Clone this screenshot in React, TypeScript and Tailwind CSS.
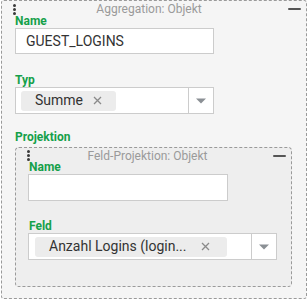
import React from 'react';

// ─── Small drawings ──────────────────────────────────────────────────────────

const DragDots: React.FC<{ className?: string }> = ({ className = '' }) => (
  <div className={`absolute flex flex-col gap-[1px] ${className}`}>
    <span className="w-[3px] h-[3px] rounded-full bg-[#3a3a3a]" />
    <span className="w-[3px] h-[3px] rounded-full bg-[#3a3a3a]" />
    <span className="w-[3px] h-[3px] rounded-full bg-[#3a3a3a]" />
  </div>
);

const Minus: React.FC<{ className?: string }> = ({ className = '' }) => (
  <span className={`absolute w-[13px] h-[2px] rounded-[1px] bg-[#555] ${className}`} />
);

const XMark = () => (
  <svg width="9" height="9" viewBox="0 0 9 9" className="shrink-0">
    <path d="M1 1L8 8M8 1L1 8" stroke="#8a8a8a" strokeWidth="1.3" />
  </svg>
);

const Caret = () => (
  <svg width="10" height="6" viewBox="0 0 10 6">
    <path d="M0 0.5H10L5 5.5Z" fill="#8b9095" />
  </svg>
);

// ─── Pieces ──────────────────────────────────────────────────────────────────

const Label: React.FC<{ children: React.ReactNode; className?: string }> = ({ children, className = '' }) => (
  <div className={`h-[14px] text-[12px] leading-[14px] font-bold text-[#15a04a] ${className}`}>{children}</div>
);

const TextInput: React.FC<{ value?: string; className?: string }> = ({ value = '', className = '' }) => (
  <div className={`flex items-center border border-[#cccccc] bg-white pl-[10px] text-[14px] text-[#333] ${className}`}>
    {value}
  </div>
);

const Chip: React.FC<{ children: React.ReactNode; className?: string }> = ({ children, className = 'pr-[14px]' }) => (
  <div className={`flex items-center h-[20px] rounded-[3px] bg-[#ececec] pl-[14px] text-[14px] text-[#333] ${className}`}>
    {children}
  </div>
);

const SelectBox: React.FC<{ children: React.ReactNode; className?: string; padClass?: string }> = ({
  children,
  className = '',
  padClass = 'pl-[5px]',
}) => (
  <div className={`flex h-[27px] border border-[#cccccc] bg-white ${className}`}>
    <div className={`flex-1 flex items-center ${padClass}`}>{children}</div>
    <div className="w-[25px] border-l border-[#cccccc] flex items-center justify-center">
      <Caret />
    </div>
  </div>
);

// ─── Main ────────────────────────────────────────────────────────────────────

export default function App() {
  return (
    <div className="w-[308px] h-[301px] overflow-hidden bg-white font-['Roboto',sans-serif]">
      <div className="ml-[1px] w-[306px] h-[299px] border border-dashed border-[#9a9a9a] rounded-[3px] bg-[#f5f5f5]">
        {/* header */}
        <div className="relative h-[13px]">
          <DragDots className="left-[11px] top-[3px]" />
          <div className="pt-[1px] pr-[10px] text-center text-[12px] leading-[14px] text-[#9a9a9a]">
            Aggregation: Objekt
          </div>
          <Minus className="right-[5px] top-[7px]" />
        </div>

        <div className="pl-[13px]">
          <Label>Name</Label>
          <TextInput value="GUEST_LOGINS" className="w-[199px] h-[26px]" />

          <Label className="mt-[19px]">Typ</Label>
          <SelectBox className="w-[199px]">
            <Chip>
              Summe
              <span className="ml-[10px] flex"><XMark /></span>
            </Chip>
          </SelectBox>

          <Label className="mt-[16px]">Projektion</Label>

          {/* nested projection panel */}
          <div className="mt-[3px] w-[277px] h-[140px] border border-dashed border-[#9a9a9a] rounded-[4px] bg-[#eeeeee]">
            <div className="relative h-[12px]">
              <DragDots className="left-[11px] top-[2px]" />
              <div className="pt-[1px] pr-[12px] text-center text-[12px] leading-[14px] text-[#9a9a9a]">
                Feld-Projektion: Objekt
              </div>
              <Minus className="right-[5px] top-[7px]" />
            </div>
            <div className="pl-[12px]">
              <Label className="pl-[1px]">Name</Label>
              <TextInput className="w-[200px] h-[27px]" />

              <Label className="mt-[18px] pl-[1px]">Feld</Label>
              <SelectBox className="w-[249px]" padClass="pl-[6px]">
                <Chip className="pr-[17px]">
                  <span className="whitespace-nowrap">Anzahl Logins (login...</span>
                  <span className="ml-[15px] flex"><XMark /></span>
                </Chip>
              </SelectBox>
            </div>
          </div>
        </div>
      </div>
    </div>
  );
}
